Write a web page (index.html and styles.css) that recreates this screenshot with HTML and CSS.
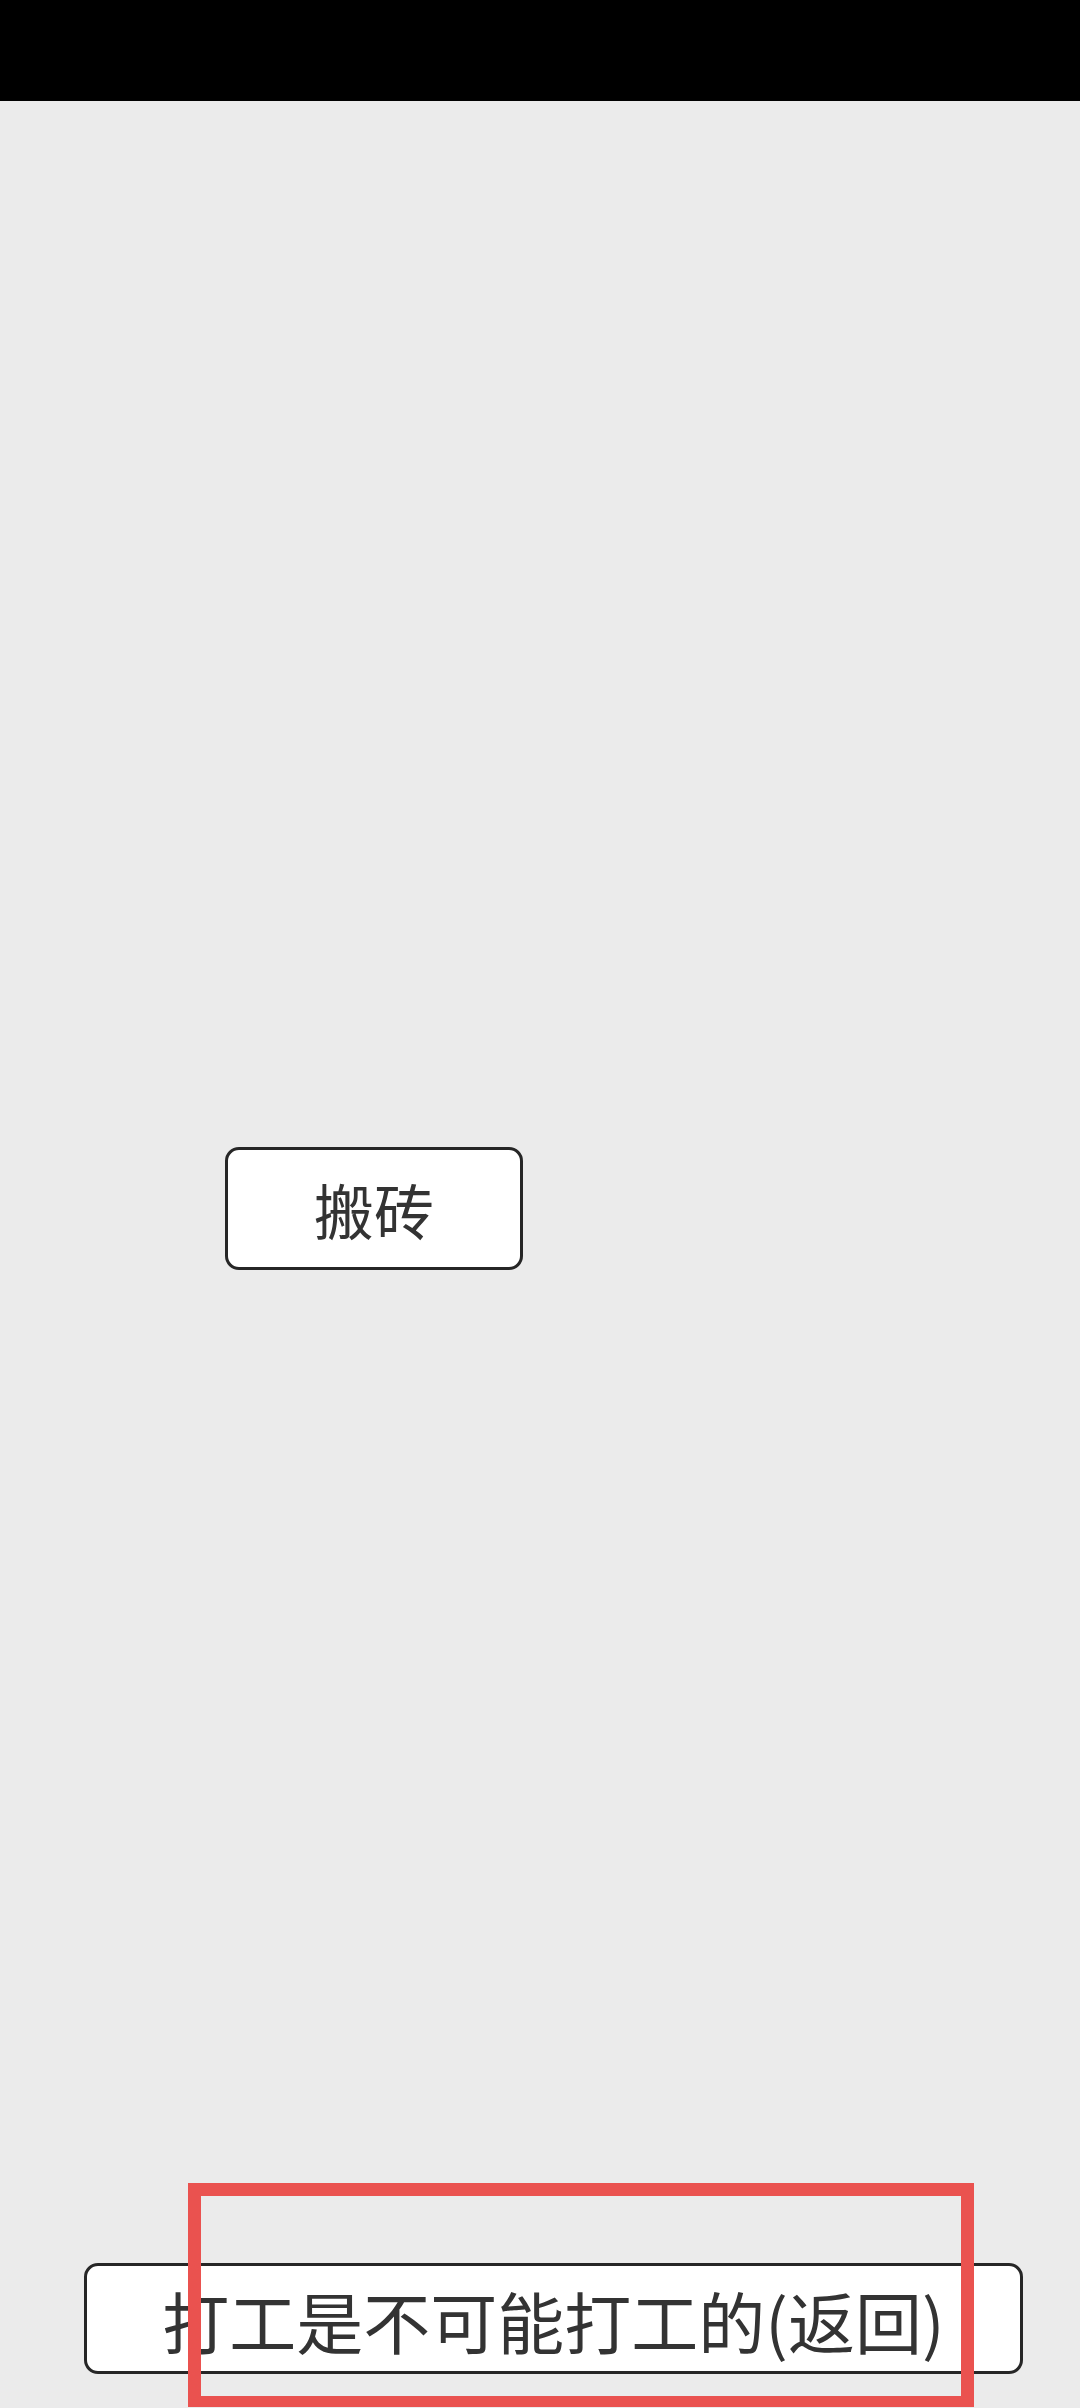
FILE: index.html
```html
<!DOCTYPE html>
<html lang="zh-CN">
<head>
<meta charset="utf-8">
<title>搬砖</title>
<link rel="stylesheet" href="styles.css">
</head>
<body>
<div class="status-bar"></div>
<main class="screen">
  <div class="top-area">
    <button class="btn btn-work">搬砖</button>
  </div>
  <div class="bottom-area">
    <button class="btn btn-back">打工是不可能打工的(返回)</button>
    <div class="highlight"></div>
  </div>
</main>
</body>
</html>
```
FILE: styles.css
```css
html, body {
  margin: 0;
  padding: 0;
}
body {
  width: 1080px;
  height: 2408px;
  overflow: hidden;
  background: #ebebeb;
  font-family: "Noto Sans CJK SC", "Noto Sans", sans-serif;
}
.status-bar {
  height: 101px;
  background: #000;
}
.screen {
  height: 2307px;
  display: flex;
  flex-direction: column;
  justify-content: space-between;
}
.top-area {
  padding-top: 1046px;
  padding-left: 225px;
}
.btn {
  box-sizing: border-box;
  background: #fff;
  border: 3px solid #262626;
  border-radius: 14px;
  color: #333;
  font-family: "Noto Sans CJK SC", "Noto Sans", sans-serif;
  display: flex;
  align-items: center;
  justify-content: center;
  padding: 0;
  margin: 0;
  white-space: nowrap;
}
.btn-work {
  width: 298px;
  height: 123px;
  font-size: 60px;
}
.bottom-area {
  position: relative;
  padding: 0 57px 34px 84px;
}
.btn-back {
  width: 939px;
  height: 111px;
  font-size: 67px;
  padding-top: 2px;
}
.highlight {
  position: absolute;
  left: 188px;
  top: -80px;
  width: 786px;
  height: 224px;
  box-sizing: border-box;
  border: 13px solid #ea524f;
  border-bottom-width: 11px;
  pointer-events: none;
}
```
